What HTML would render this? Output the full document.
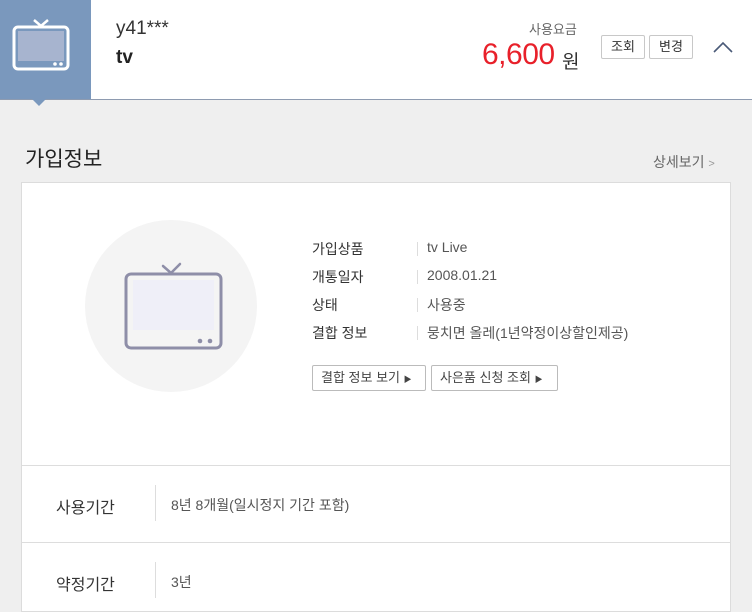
<!DOCTYPE html>
<html><head><meta charset="utf-8"><style>
*{margin:0;padding:0;box-sizing:border-box}
body{width:752px;height:602px;overflow:hidden;background:#efefef;font-family:"Liberation Sans","Noto Sans CJK KR",sans-serif;position:relative;color:#333}
.hdr{position:absolute;left:0;top:0;width:752px;height:100px;background:#fff;border-bottom:1px solid #8e9bb0}
.blue{position:absolute;left:0;top:0;width:91px;height:99px;background:#7a98bd}
.tri{position:absolute;left:32px;top:99px;width:0;height:0;border-left:7px solid transparent;border-right:7px solid transparent;border-top:7px solid #7a98bd}
.abs{position:absolute;white-space:nowrap}
.btn{position:absolute;border:1px solid #c8c8c8;border-radius:2px;background:#fff;font-size:13px;color:#333;text-align:center;line-height:22px;height:24px}
.card{position:absolute;left:21px;top:182px;width:710px;height:430px;background:#fff;border:1px solid #dcdcdc}
.lbl{font-size:14px;color:#333}
.val{font-size:14px;color:#555}
.vs{position:absolute;width:1px;background:#ddd}
.sb{position:absolute;border:1px solid #bbb;border-radius:2px;font-size:13px;color:#444;height:26px;line-height:24px;padding-left:8px;background:#fff}
</style></head><body>
<div class="hdr">
 <div class="blue">
  <svg width="91" height="99" viewBox="0 0 91 99">
   <rect x="14" y="27" width="54" height="42" rx="4" fill="none" stroke="#fff" stroke-width="3"/>
   <rect x="18" y="31" width="46" height="30" fill="#a7b4cf"/>
   <path d="M34 20 L41 26 L48 20" fill="none" stroke="#fff" stroke-width="2.5"/>
   <circle cx="55" cy="64" r="1.8" fill="#fff"/><circle cx="61" cy="64" r="1.8" fill="#fff"/>
  </svg>
 </div>
 <div class="abs" style="left:116px;top:18px;font-size:19px;color:#333">y41***</div>
 <div class="abs" style="left:116px;top:47px;font-size:19px;font-weight:bold;color:#222">tv</div>
 <div class="abs" style="left:529px;top:19px;font-size:13px;color:#666">사용요금</div>
 <div class="abs" style="left:482px;top:38px;font-size:30px;color:#e8202a;letter-spacing:-0.5px">6,600</div>
 <div class="abs" style="left:562px;top:47px;font-size:19px;color:#333">원</div>
 <div class="btn" style="left:601px;top:35px;width:44px">조회</div>
 <div class="btn" style="left:649px;top:35px;width:44px">변경</div>
 <svg class="abs" style="left:712px;top:40px" width="22" height="14"><path d="M2 12 L11 3 L20 12" fill="none" stroke="#4a5a78" stroke-width="1.6"/></svg>
</div>
<div class="tri"></div>
<div class="abs" style="left:25px;top:143px;font-size:21px;color:#222">가입정보</div>
<div class="abs" style="left:653px;top:152px;font-size:14px;color:#666">상세보기 <span style="font-size:11px;color:#999">&gt;</span></div>
<div class="card">
 <svg class="abs" style="left:62px;top:36px" width="174" height="174">
  <circle cx="87" cy="87" r="86" fill="#f4f4f4"/>
  <rect x="42" y="55" width="95" height="74" rx="5" fill="none" stroke="#8e8ea8" stroke-width="3"/>
  <rect x="49" y="61" width="81" height="50" fill="#efeff8"/>
  <path d="M79 47 L87 54 L96 45" fill="none" stroke="#8e8ea8" stroke-width="2.5" stroke-linecap="round"/>
  <circle cx="116" cy="122" r="2.3" fill="#8e8ea8"/><circle cx="126" cy="122" r="2.3" fill="#8e8ea8"/>
 </svg>
 <div class="abs lbl" style="left:290px;top:56px">가입상품</div>
 <div class="abs lbl" style="left:290px;top:84px">개통일자</div>
 <div class="abs lbl" style="left:290px;top:112px">상태</div>
 <div class="abs lbl" style="left:290px;top:140px">결합 정보</div>
 <div class="vs" style="left:395px;top:59px;height:14px"></div>
 <div class="vs" style="left:395px;top:87px;height:14px"></div>
 <div class="vs" style="left:395px;top:115px;height:14px"></div>
 <div class="vs" style="left:395px;top:143px;height:14px"></div>
 <div class="abs val" style="left:405px;top:56px">tv Live</div>
 <div class="abs val" style="left:405px;top:84px">2008.01.21</div>
 <div class="abs val" style="left:405px;top:112px">사용중</div>
 <div class="abs val" style="left:405px;top:140px">뭉치면 올레(1년약정이상할인제공)</div>
 <div class="sb" style="left:290px;top:182px;width:114px">결합 정보 보기 <span style="font-size:8px">▶</span></div>
 <div class="sb" style="left:409px;top:182px;width:127px">사은품 신청 조회 <span style="font-size:8px">▶</span></div>
 <div class="abs" style="left:0;top:282px;width:708px;height:1px;background:#ddd"></div>
 <div class="abs" style="left:34px;top:311px;font-size:16px;color:#333">사용기간</div>
 <div class="vs" style="left:133px;top:302px;height:36px"></div>
 <div class="abs val" style="left:149px;top:312px">8년 8개월(일시정지 기간 포함)</div>
 <div class="abs" style="left:0;top:359px;width:708px;height:1px;background:#ddd"></div>
 <div class="abs" style="left:34px;top:388px;font-size:16px;color:#333">약정기간</div>
 <div class="vs" style="left:133px;top:379px;height:36px"></div>
 <div class="abs val" style="left:149px;top:389px">3년</div>
</div>
</body></html>
